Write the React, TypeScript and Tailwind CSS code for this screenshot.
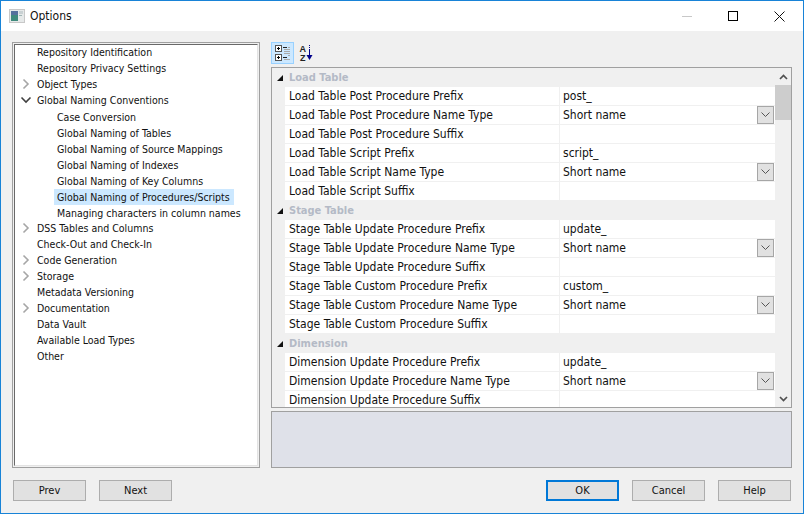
import React from "react";

const font = "font-['DejaVu_Sans_Condensed','Liberation_Sans',sans-serif] text-[12px] text-[#111]";

type TreeRow = { t: string; level: 0 | 1; icon?: "closed" | "open"; sel?: boolean; cls?: string };
const tree: TreeRow[] = [
  { t: "Repository Identification", level: 0 },
  { t: "Repository Privacy Settings", level: 0 },
  { t: "Object Types", level: 0, icon: "closed" },
  { t: "Global Naming Conventions", level: 0, icon: "open" },
  { t: "Case Conversion", level: 1, cls: "mt-px" },
  { t: "Global Naming of Tables", level: 1 },
  { t: "Global Naming of Source Mappings", level: 1 },
  { t: "Global Naming of Indexes", level: 1 },
  { t: "Global Naming of Key Columns", level: 1 },
  { t: "Global Naming of Procedures/Scripts", level: 1, sel: true },
  { t: "Managing characters in column names", level: 1 },
  { t: "DSS Tables and Columns", level: 0, icon: "closed", cls: "-mt-px" },
  { t: "Check-Out and Check-In", level: 0 },
  { t: "Code Generation", level: 0, icon: "closed" },
  { t: "Storage", level: 0, icon: "closed" },
  { t: "Metadata Versioning", level: 0 },
  { t: "Documentation", level: 0, icon: "closed" },
  { t: "Data Vault", level: 0 },
  { t: "Available Load Types", level: 0 },
  { t: "Other", level: 0 },
];

type Prop = { h?: string; k?: string; v?: string; d?: boolean };
const props: Prop[] = [
  { h: "Load Table" },
  { k: "Load Table Post Procedure Prefix", v: "post_" },
  { k: "Load Table Post Procedure Name Type", v: "Short name", d: true },
  { k: "Load Table Post Procedure Suffix" },
  { k: "Load Table Script Prefix", v: "script_" },
  { k: "Load Table Script Name Type", v: "Short name", d: true },
  { k: "Load Table Script Suffix" },
  { h: "Stage Table" },
  { k: "Stage Table Update Procedure Prefix", v: "update_" },
  { k: "Stage Table Update Procedure Name Type", v: "Short name", d: true },
  { k: "Stage Table Update Procedure Suffix" },
  { k: "Stage Table Custom Procedure Prefix", v: "custom_" },
  { k: "Stage Table Custom Procedure Name Type", v: "Short name", d: true },
  { k: "Stage Table Custom Procedure Suffix" },
  { h: "Dimension" },
  { k: "Dimension Update Procedure Prefix", v: "update_" },
  { k: "Dimension Update Procedure Name Type", v: "Short name", d: true },
  { k: "Dimension Update Procedure Suffix" },
];

function Chevron({ open }: { open?: boolean }) {
  return open ? (
    <svg width="12" height="12" viewBox="0 0 12 12" fill="none" stroke="#404040" strokeWidth="1.6">
      <path d="M1.5 3.5 L6 8 L10.5 3.5" />
    </svg>
  ) : (
    <svg width="12" height="12" viewBox="0 0 12 12" fill="none" stroke="#a6a6a6" strokeWidth="1.6">
      <path d="M3.5 1.5 L8 6 L3.5 10.5" />
    </svg>
  );
}

function Btn({ label, primary }: { label: string; primary?: boolean }) {
  return (
    <div
      className={`w-[73px] h-[21px] pt-[2px] flex items-center justify-center text-[11px] bg-[#e1e1e1] ${
        primary ? "border-2 border-[#0078d7]" : "border border-[#adadad]"
      }`}
    >
      {label}
    </div>
  );
}

function AppIcon() {
  return (
    <svg width="16" height="16" viewBox="0 0 16 16" shapeRendering="crispEdges">
      <rect x="0.5" y="1.5" width="15" height="13" fill="#e6e9e9" stroke="#c8c8c8" />
      <rect x="2" y="3" width="7" height="10" fill="#3f8a7c" />
      <rect x="2" y="3" width="7" height="4" fill="#55709c" />
      <rect x="10" y="3" width="4" height="3" fill="#c9d1d3" />
      <rect x="10" y="7" width="3" height="1" fill="#9fb5b5" />
    </svg>
  );
}

function CategorizedIcon() {
  return (
    <svg width="16" height="16" viewBox="0 0 16 16" shapeRendering="crispEdges">
      <rect x="0.5" y="0.5" width="6" height="6" fill="#fff" stroke="#555" />
      <path d="M2 3.5h3M3.5 2v3" stroke="#000" />
      <rect x="0.5" y="9.5" width="6" height="6" fill="#fff" stroke="#555" />
      <path d="M2 12.5h3M3.5 11v3" stroke="#000" />
      <path d="M8 2.5h4M8 12.5h4" stroke="#222" />
      <path d="M9 4.5h6M9 6.5h6M9 8.5h6M13 2.5h2M13 10.5h2M9 14.5h6" stroke="#a9a9a9" />
    </svg>
  );
}

function SortIcon() {
  return (
    <svg width="16" height="18" viewBox="0 0 16 18">
      <text x="0.5" y="8" fontSize="9" fontWeight="bold" fill="#222" fontFamily="'Liberation Sans',sans-serif">A</text>
      <text x="1" y="17" fontSize="9" fontWeight="bold" fill="#222" fontFamily="'Liberation Sans',sans-serif">Z</text>
      <path d="M10.5 1v1M10.5 3v1M10.5 5v7" stroke="#00008b" strokeWidth="1" />
      <path d="M7.5 11h6l-3 5z" fill="#00008b" />
    </svg>
  );
}

function PropRow({ p }: { p: Prop }) {
  if (p.h) {
    return (
      <div className="h-[19px] flex items-center bg-[#f0f0f0] shrink-0">
        <div className="w-[13px] flex justify-center shrink-0 pl-[2px]">
          <svg width="8" height="8" viewBox="0 0 8 8">
            <path d="M7 1v6H1z" fill="#111" />
          </svg>
        </div>
        <span className="pl-[4px] pt-[2px] font-bold text-[11px] text-[#b4bac6]">{p.h}</span>
      </div>
    );
  }
  return (
    <div className="h-[19px] flex bg-[#f0f0f0] shrink-0">
      <div className="w-[13px] shrink-0" />
      <div className="flex flex-1 bg-white border-b border-[#f0f0f0]">
        <div className="w-[275px] shrink-0 pl-[4px] flex items-center border-r border-[#f0f0f0]">{p.k}</div>
        <div className="flex-1 pl-[3px] flex items-center justify-between relative">
          <span>{p.v}</span>
          {p.d && (
            <div className="w-[17px] h-[18px] mr-px border border-[#a6a6a6] bg-[#e1e1e1] flex items-center justify-center">
              <svg width="9" height="6" viewBox="0 0 9 6" fill="none" stroke="#555" strokeWidth="1">
                <path d="M0.5 0.5 L4.5 4.5 L8.5 0.5" />
              </svg>
            </div>
          )}
        </div>
      </div>
    </div>
  );
}

export default function App() {
  return (
    <div className={`${font} w-[804px] h-[514px] flex flex-col border-x border-b border-[#1883d7] bg-[#f0f0f0]`}>
      {/* title bar */}
      <div className="h-[31px] bg-white flex items-center border-t border-[#1883d7] shrink-0">
        <div className="ml-[8px]"><AppIcon /></div>
        <span className="ml-[5px] text-[12px]">Options</span>
        <div className="ml-auto flex items-center">
          <div className="w-[46px] flex justify-center">
            <div className="w-[10px] h-px bg-[#c8c8c8]" />
          </div>
          <div className="w-[46px] flex justify-center">
            <div className="w-[10px] h-[10px] border border-black" />
          </div>
          <div className="w-[46px] flex justify-center mr-[1px]">
            <svg width="11" height="11" viewBox="0 0 11 11" stroke="#111" strokeWidth="1">
              <path d="M0.5 0.5 L10.5 10.5 M10.5 0.5 L0.5 10.5" />
            </svg>
          </div>
        </div>
      </div>

      {/* body */}
      <div className="flex-1 flex flex-col pl-[11px] pr-[11px] pt-[11px] pb-[12px] min-h-0">
        <div className="flex flex-1 gap-[11px] min-h-0">
          {/* tree */}
          <div className="w-[248px] border border-[#a0a0a0] p-px shrink-0">
            <div className="h-full bg-white border-l border-t border-[#696969] border-r-[#e3e3e3] border-b-[#e3e3e3] border-r border-b text-[10.5px]">
              <div className="-mt-px">
                {tree.map((r) => (
                  <div key={r.t} className={`h-[16px] flex items-center whitespace-nowrap ${r.cls ?? ""}`}>
                    <div className="w-[17px] shrink-0 flex justify-end">
                      {r.icon && <Chevron open={r.icon === "open"} />}
                    </div>
                    <div className={r.level === 1 ? "w-[22px] shrink-0" : "w-[2px] shrink-0"} />
                    <span className={`pl-[3px] pr-[4px] leading-[16px] ${r.sel ? "bg-[#cce8ff]" : ""}`}>{r.t}</span>
                  </div>
                ))}
              </div>
            </div>
          </div>

          {/* right */}
          <div className="flex-1 flex flex-col min-w-0">
            <div className="h-[25px] flex items-start gap-[2px] shrink-0">
              <div className="w-[23px] h-[22px] bg-[#cce8ff] border border-[#99d1ff] flex items-center justify-center">
                <CategorizedIcon />
              </div>
              <div className="w-[22px] h-[22px] flex items-center justify-center">
                <SortIcon />
              </div>
            </div>
            <div className="h-[341px] border border-[#a0a0a0] bg-white flex shrink-0 overflow-hidden">
              <div className="flex-1 flex flex-col overflow-hidden">
                {props.map((p, i) => (
                  <PropRow key={i} p={p} />
                ))}
              </div>
              <div className="w-[16px] bg-[#f0f0f0] flex flex-col items-center shrink-0 relative">
                <div className="h-[17px] flex items-center justify-center">
                  <svg width="9" height="6" viewBox="0 0 9 6" fill="none" stroke="#505050" strokeWidth="1.7">
                    <path d="M1 5 L4.5 1.5 L8 5" />
                  </svg>
                </div>
                <div className="w-full h-[35px] bg-[#cdcdcd]" />
                <div className="mt-auto h-[17px] flex items-center justify-center">
                  <svg width="9" height="6" viewBox="0 0 9 6" fill="none" stroke="#505050" strokeWidth="1.7">
                    <path d="M1 1 L4.5 4.5 L8 1" />
                  </svg>
                </div>
              </div>
            </div>
            <div className="flex-1 mt-[3px] border border-[#a0a0a0] bg-[#dfe1e9]" />
          </div>
        </div>

        {/* buttons */}
        <div className="flex mt-[12px] shrink-0">
          <div className="ml-px flex gap-[13px]">
            <Btn label="Prev" />
            <Btn label="Next" />
          </div>
          <div className="ml-auto flex gap-[13px] mr-[1px]">
            <Btn label="OK" primary />
            <Btn label="Cancel" />
            <Btn label="Help" />
          </div>
        </div>
      </div>
    </div>
  );
}
